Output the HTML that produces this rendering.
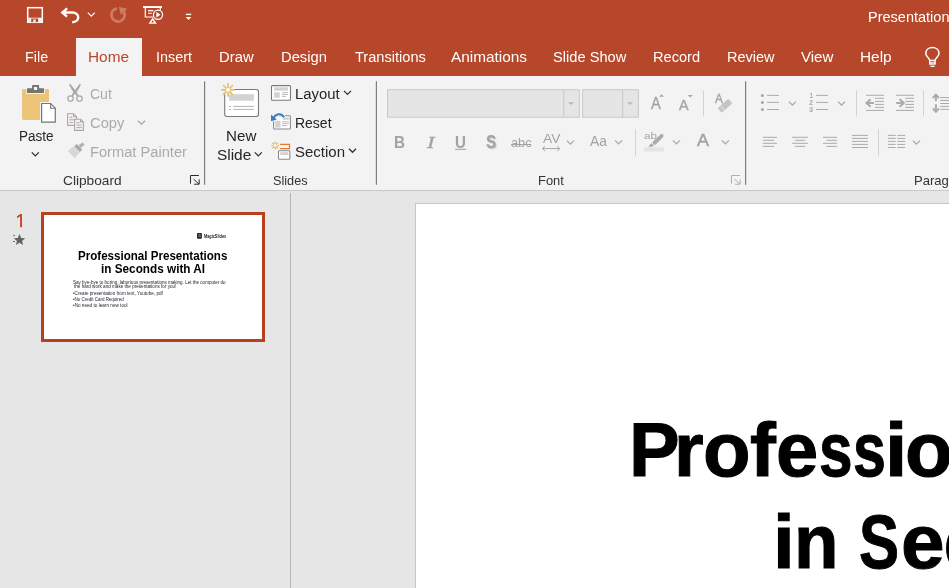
<!DOCTYPE html>
<html>
<head>
<meta charset="utf-8">
<title>PowerPoint</title>
<style>
html,body{margin:0;padding:0;}
body{width:949px;height:588px;overflow:hidden;position:relative;background:#e6e6e6;font-family:"Liberation Sans",sans-serif;}
.abs{position:absolute;}
#titlebar{left:0;top:0;width:949px;height:76px;background:#b7472a;}
#hometab{left:76px;top:38px;width:66px;height:38px;background:#f3f3f3;}
.tab{position:absolute;top:47px;height:20px;line-height:20px;font-size:15.5px;color:#fff;white-space:nowrap;transform-origin:0 50%;}
#ribbon{left:0;top:76px;width:949px;height:114px;background:#f3f3f3;}
#ribbonline{left:0;top:190px;width:949px;height:1px;background:#c8c8c8;}
.lbl{position:absolute;font-size:15.5px;line-height:20px;height:20px;color:#262626;white-space:nowrap;transform-origin:0 50%;}
.dis{color:#aaaaaa;}
.grp{position:absolute;font-size:13px;line-height:16px;color:#333;white-space:nowrap;transform-origin:0 50%;}
#paneldiv{left:290px;top:193px;width:1px;height:395px;background:#b4b4b4;}
#thumb{left:41px;top:212px;width:218px;height:124px;border:3px solid #b9401f;background:#fff;}
#slide{left:415px;top:203px;width:540px;height:390px;background:#fff;border:1px solid #c6c6c6;}
svg{position:absolute;overflow:visible;}
.bl{position:absolute;font-weight:bold;font-size:75.5px;line-height:100px;height:100px;color:#000;-webkit-text-stroke:1.0px #000;transform-origin:0 0;white-space:nowrap;}
.gl{position:absolute;white-space:nowrap;transform-origin:0 0;}
.tt{position:absolute;white-space:nowrap;transform-origin:0 0;}
#root{position:absolute;left:0;top:0;width:949px;height:588px;overflow:hidden;will-change:transform;}
</style>
</head>
<body>
<div id="root">
<div id="titlebar" class="abs"></div>
<div id="hometab" class="abs"></div>
<div id="ribbon" class="abs"></div>
<div id="ribbonline" class="abs"></div>

<!-- TABS -->
<span class="tab" id="t-file" style="left:24.9px;transform:scaleX(0.926);">File</span>
<span class="tab" id="t-home" style="left:88.1px;color:#b7472a;transform:scaleX(0.992);">Home</span>
<span class="tab" id="t-insert" style="left:156.0px;transform:scaleX(0.928);">Insert</span>
<span class="tab" id="t-draw" style="left:219.3px;transform:scaleX(0.958);">Draw</span>
<span class="tab" id="t-design" style="left:281.2px;transform:scaleX(0.952);">Design</span>
<span class="tab" id="t-trans" style="left:354.6px;transform:scaleX(0.941);">Transitions</span>
<span class="tab" id="t-anim" style="left:451.0px;transform:scaleX(0.992);">Animations</span>
<span class="tab" id="t-show" style="left:552.8px;transform:scaleX(0.945);">Slide Show</span>
<span class="tab" id="t-record" style="left:653.3px;transform:scaleX(0.941);">Record</span>
<span class="tab" id="t-review" style="left:727.2px;transform:scaleX(0.936);">Review</span>
<span class="tab" id="t-view" style="left:800.9px;transform:scaleX(0.972);">View</span>
<span class="tab" id="t-help" style="left:860.2px;transform:scaleX(0.992);">Help</span>
<span class="tab" id="t-pres" style="left:868.1px;top:7.4px;transform:scaleX(0.936);">Presentation1</span>


<!-- QAT ICONS -->
<svg id="qat" style="left:0;top:0;" width="210" height="36" viewBox="0 0 210 36">
  <!-- save -->
  <rect x="27.7" y="7.7" width="14.6" height="14.6" fill="none" stroke="#fff" stroke-width="1.5"/>
  <rect x="27.5" y="17.7" width="15" height="5" fill="#f6efec"/>
  <rect x="31.2" y="18.5" width="6.9" height="3.6" fill="#b7472a"/>
  <rect x="33.2" y="19.5" width="2.5" height="2.6" fill="#f6efec"/>
  <!-- undo -->
  <path d="M67.2 8.4 L62.3 12.5 L67 16.7" fill="none" stroke="#fff" stroke-width="2.4" stroke-linejoin="miter"/>
  <path d="M62.6 12.5 H72.4 C80.2 12.5 80.2 22.2 72.2 22.2" fill="none" stroke="#fff" stroke-width="2.4"/>
  <!-- undo chevron -->
  <path d="M87.8 12.6 L91.3 16.1 L94.8 12.6" fill="none" stroke="#fff" stroke-width="1.2"/>
  <!-- redo dim -->
  <path d="M116.85 8.35 A6.65 6.65 0 1 0 123.6 11.2" fill="none" stroke="#cc7b65" stroke-width="2.7"/>
  <path d="M119 7 L126.8 8.4 L124.6 12.4 L120.8 14.8 Z" fill="#cc7b65"/>
  <!-- presentation -->
  <rect x="143" y="6.1" width="19" height="1.9" fill="#fff"/>
  <path d="M145.3 8 V17 H153" fill="none" stroke="#fff" stroke-width="1.2"/>
  <path d="M160.3 8 V10" fill="none" stroke="#fff" stroke-width="1.2"/>
  <path d="M148 10.6 H153.4 M148 13.3 H151.8" stroke="#fff" stroke-width="1.1"/>
  <circle cx="158" cy="14.8" r="4.6" fill="none" stroke="#fff" stroke-width="1.2"/>
  <path d="M156.3 12 L160.6 14.8 L156.3 17.6 Z" fill="#fff"/>
  <path d="M152.7 17.4 L148.6 23.7 H156.8 Z" fill="#fff"/>
  <path d="M152.7 20.2 L151.2 22.4 H154.2 Z" fill="#b7472a"/>
  <!-- customize -->
  <rect x="185.9" y="13.7" width="5.3" height="1.4" fill="#fff"/>
  <path d="M185.7 16.9 H191.4 L188.55 20 Z" fill="#fff"/>
</svg>
<!-- lightbulb -->
<svg style="left:920px;top:44px;" width="29" height="28" viewBox="920 44 29 28">
  <path d="M929.7 60.4 C929.4 57.6 925.8 56.6 925.8 53.6 C925.8 49.8 928.8 47.6 932.4 47.6 C936 47.6 939 49.8 939 53.6 C939 56.6 935.4 57.6 935.1 60.4" fill="none" stroke="#fff" stroke-width="1.5"/>
  <rect x="929.7" y="60.4" width="5.4" height="3.6" fill="none" stroke="#fff" stroke-width="1.4"/>
  <path d="M929.7 62.4 H935.1" stroke="#fff" stroke-width="0.9"/>
  <path d="M930.4 66.3 H934.6" stroke="#fff" stroke-width="1.3"/>
</svg>

<!-- RIBBON LABELS -->
<span class="lbl" id="l-paste" style="left:19.0px;top:125.7px;transform:scaleX(0.872);">Paste</span>
<span class="lbl dis" id="l-cut" style="left:90.2px;top:83.9px;transform:scaleX(0.903);">Cut</span>
<span class="lbl dis" id="l-copy" style="left:90.2px;top:112.9px;transform:scaleX(0.950);">Copy</span>
<span class="lbl dis" id="l-fp" style="left:89.7px;top:141.9px;transform:scaleX(0.946);">Format Painter</span>
<span class="grp" id="l-clip" style="left:62.6px;top:172.9px;transform:scaleX(1.054);">Clipboard</span>
<span class="lbl" id="l-new" style="left:225.7px;top:125.7px;transform:scaleX(0.978);">New</span>
<span class="lbl" id="l-slide" style="left:216.7px;top:145.4px;transform:scaleX(0.994);">Slide</span>
<span class="lbl" id="l-layout" style="left:294.8px;top:83.9px;transform:scaleX(0.959);">Layout</span>
<span class="lbl" id="l-reset" style="left:294.9px;top:112.9px;transform:scaleX(0.902);">Reset</span>
<span class="lbl" id="l-section" style="left:295.3px;top:141.9px;transform:scaleX(0.968);">Section</span>
<span class="grp" id="l-slides" style="left:272.6px;top:172.9px;transform:scaleX(0.975);">Slides</span>
<span class="grp" id="l-font" style="left:537.7px;top:172.9px;transform:scaleX(0.992);">Font</span>
<span class="grp" id="l-para" style="left:914.3px;top:172.9px;transform:scaleX(1.005);">Paragraph</span>
<!-- RIBBON ICONS -->
<svg id="ribsvg" style="left:0;top:76px;" width="949" height="114" viewBox="0 76 949 114">
<defs>
  <path id="chev" d="M-3.5 -1.8 L0 1.7 L3.5 -1.8" fill="none" stroke-width="1.3"/>
</defs>
<!-- group separators -->
<rect x="204" y="81.3" width="1.2" height="103.5" fill="#7d7d7d"/>
<rect x="375.8" y="81.3" width="1.2" height="103.5" fill="#7d7d7d"/>
<rect x="745" y="81.3" width="1.2" height="103.5" fill="#7d7d7d"/>
<!-- thin separators -->
<rect x="635" y="129" width="1" height="26.5" fill="#d2d2d2"/>
<rect x="703" y="90.4" width="1" height="26" fill="#d2d2d2"/>
<rect x="856" y="90.3" width="1" height="26.2" fill="#d2d2d2"/>
<rect x="923" y="90.3" width="1" height="26.2" fill="#d2d2d2"/>
<rect x="878" y="129" width="1" height="26.7" fill="#d2d2d2"/>

<!-- PASTE -->
<g id="i-paste">
  <rect x="22.1" y="88.9" width="26.9" height="31" rx="1.3" fill="#ebc477"/>
  <path d="M26.2 94 V87.4 H31.3 V84.2 H39.9 V87.4 H44.9 V94 Z" fill="#f3f3f3"/>
  <path d="M27 93.1 V88.6 Q27 88.2 27.4 88.2 H32.1 V85.6 Q32.1 85 32.7 85 H38.5 Q39.1 85 39.1 85.6 V88.2 H43.6 Q44 88.2 44 88.6 V93.1 Z" fill="#757575"/>
  <rect x="34" y="87" width="3.1" height="3" fill="#f6f6f6"/>
  <path d="M40 102 H51.5 L56.8 107.3 V123.8 H40 Z" fill="#f3f3f3"/>
  <path d="M41.6 103.5 H50.6 L55.3 108.2 V122.2 H41.6 Z" fill="#fff" stroke="#777" stroke-width="1.2" stroke-linejoin="miter"/>
  <path d="M50.6 103.5 V108.2 H55.3" fill="none" stroke="#777" stroke-width="1.1"/>
</g>
<use href="#chev" x="35.3" y="154.2" stroke="#333"/>

<!-- CUT -->
<g id="i-cut" fill="none" stroke="#a8a8a8" stroke-width="1.2">
  <circle cx="70.5" cy="98.6" r="2.7"/>
  <circle cx="79.5" cy="98.6" r="2.7"/>
  <path d="M69.6 84 C70 88 72.5 91 77.6 96.3 L78.4 95.6 C76 91 73 87.5 69.6 84 Z" fill="#a8a8a8" stroke="none"/>
  <path d="M80.4 84 C80 88 77.5 91 72.4 96.3 L71.6 95.6 C74 91 77 87.5 80.4 84 Z" fill="#a8a8a8" stroke="none"/>
  <path d="M69.7 84.2 L77.9 96 M80.3 84.2 L72.1 96" stroke-width="1.5"/>
</g>
<!-- COPY -->
<g id="i-copy" stroke="#a8a8a8" stroke-width="1.1" fill="#f7f0f5">
  <path d="M67.6 113.7 H73.6 L76.6 116.7 V125.4 H67.6 Z"/>
  <path d="M73.6 113.7 V116.7 H76.6" fill="none"/>
  <path d="M69.4 117.2 H72.3 M69.4 119.8 H74.8 M69.4 122.4 H73" stroke-width="1"/>
  <path d="M74.6 119.2 H80.6 L83.4 122 V130.4 H74.6 Z"/>
  <path d="M80.6 119.2 V122 H83.4" fill="none"/>
  <path d="M76.4 122.6 H79.6 M76.4 125.1 H81.7 M76.4 127.6 H81.7" stroke-width="1"/>
</g>
<use href="#chev" x="141.5" y="122.5" stroke="#a8a8a8"/>
<!-- FORMAT PAINTER -->
<g id="i-fp">
  <path d="M67.8 151 L73.6 146.4 L79.6 152.6 L74.8 158.2 Z" fill="#d9d5d9"/>
  <path d="M74.2 146.2 L76.8 144 L82.2 149.6 L79.8 152 Z" fill="#a8a8a8"/>
  <path d="M78.6 145 L82.6 142.4 L84.6 144.6 L81 148 Z" fill="#b4b0b4"/>
</g>

<!-- NEW SLIDE -->
<g id="i-newslide">
  <rect x="224.7" y="89.5" width="33.8" height="27" rx="2.2" fill="#fff" stroke="#7a7a7a" stroke-width="1.1"/>
  <rect x="229.1" y="94.2" width="24.8" height="6.5" fill="#d2d2d2"/>
  <path d="M229 106.4 H231 M233.1 106.4 H253.9 M229 109.4 H231 M233.1 109.4 H253.9" stroke="#b4b4b4" stroke-width="1"/>
  <circle cx="228" cy="89.9" r="4.6" fill="#f3f3f3"/>
  <g stroke="#eabd70" stroke-width="1.7">
    <path d="M228 83 V96.8 M221.1 89.9 H234.9 M223.1 85 L232.9 94.8 M232.9 85 L223.1 94.8"/>
  </g>
  <circle cx="228" cy="89.9" r="1.9" fill="#fff"/>
</g>
<use href="#chev" x="258.3" y="154.2" stroke="#333"/>
<!-- LAYOUT -->
<g id="i-layout">
  <rect x="271.5" y="85.6" width="19" height="14.7" rx="1" fill="#fff" stroke="#7a7a7a" stroke-width="1.1"/>
  <rect x="274.1" y="87.3" width="13.9" height="3.4" fill="#d2d2d2"/>
  <rect x="274.1" y="92.3" width="5.7" height="5.5" fill="#d2d2d2"/>
  <path d="M282 92.6 H288 M282 94.5 H288 M282 96.4 H286" stroke="#b4b4b4" stroke-width="0.9"/>
</g>
<use href="#chev" x="347.5" y="92.7" stroke="#333"/>
<!-- RESET -->
<g id="i-reset">
  <rect x="273.6" y="115.8" width="16.8" height="13.2" rx="0.8" fill="#fff" stroke="#8a8a8a" stroke-width="1.1"/>
  <rect x="275.2" y="120.8" width="5.3" height="6.8" fill="#d2d2d2"/>
  <rect x="283" y="117.4" width="5.9" height="2.4" fill="#d2d2d2"/>
  <path d="M282 121.8 H288.9 M282 123.7 H288.9 M282 125.6 H287" stroke="#b4b4b4" stroke-width="0.9"/>
  <path d="M273.6 119 C274.6 113.6 281.8 112.4 284 117.4" fill="none" stroke="#f3f3f3" stroke-width="3.6"/>
  <path d="M270.2 113.6 L277.8 120.2 L270.2 122 Z" fill="#f3f3f3"/>
  <path d="M273.6 119 C274.6 113.6 281.8 112.4 284 117.4" fill="none" stroke="#3d7dc0" stroke-width="2"/>
  <path d="M271 114.4 L276.8 119.6 L271 121.2 Z" fill="#3d7dc0"/>
</g>
<!-- SECTION -->
<g id="i-section">
  <g stroke="#eabd70" stroke-width="1.3">
    <path d="M275.2 141.6 V149.6 M271.2 145.6 H279.2 M272.4 142.8 L278 148.4 M278 142.8 L272.4 148.4"/>
  </g>
  <circle cx="275.2" cy="145.6" r="1.4" fill="#fff"/>
  <path d="M280.1 144.4 H289.5 V148.6 H280.1" fill="none" stroke="#e8772e" stroke-width="1.2"/>
  <rect x="278.5" y="150.8" width="11.3" height="8.4" rx="0.7" fill="#fff" stroke="#8a8a8a" stroke-width="1.1"/>
  <rect x="280.2" y="152.2" width="8" height="2.8" fill="#d2d2d2"/>
</g>
<use href="#chev" x="352.5" y="150.6" stroke="#333"/>

<!-- dialog launchers -->
<g id="dl1" fill="none" stroke="#2b2b2b" stroke-width="1">
  <path d="M190.5 183.6 V175.5 H198.9"/>
  <path d="M193.6 179.2 L199 184 M199.2 179.4 V184.2 H194"/>
</g>
<g id="dl2" fill="none" stroke="#b0b0b0" stroke-width="1">
  <path d="M731.5 183.6 V175.5 H739.9"/>
  <path d="M734.6 179.2 L740 184 M740.2 179.4 V184.2 H735"/>
</g>

<!-- FONT BOXES -->
<rect x="387.5" y="89.8" width="191.8" height="27.4" fill="#e5e5e5" stroke="#c8c8c8" stroke-width="1"/>
<rect x="563.3" y="89.8" width="1" height="27.4" fill="#c8c8c8"/>
<path d="M568 102.2 H574.2 L571.1 105 Z" fill="#b9b9b9"/>
<rect x="582.6" y="89.8" width="55.8" height="27.4" fill="#e5e5e5" stroke="#c8c8c8" stroke-width="1"/>
<rect x="622.2" y="89.8" width="1" height="27.4" fill="#c8c8c8"/>
<path d="M626.9 102.2 H633.1 L630 105 Z" fill="#b9b9b9"/>
<!-- grow/shrink triangles -->
<path d="M659 96.8 H664 L661.5 94.2 Z" fill="#a8a8a8"/>
<path d="M687.6 95 H692.8 L690.2 97.5 Z" fill="#a8a8a8"/>
<!-- clear formatting eraser -->
<g id="i-clear">
  <path d="M718.6 107.2 L727.4 99.6 Q728.4 98.8 729.3 99.8 L731.6 102.5 Q732.4 103.5 731.4 104.3 L722.6 111.9 Q721.6 112.7 720.8 111.7 L718.4 109 Q717.6 108 718.6 107.2 Z" fill="#c6c2c6"/>
  <path d="M720.5 105.6 L724.6 110.3" stroke="#f3f3f3" stroke-width="0.9"/>
</g>
<!-- U underline, abc strike, AV arrow -->
<rect x="455.1" y="148.8" width="10.9" height="1.1" fill="#a3a3a3"/>
<rect x="511" y="144" width="20" height="1" fill="#a3a3a3"/>
<g stroke="#a8a8a8" stroke-width="1" fill="none">
  <path d="M542.4 148.6 H559.8"/>
  <path d="M545 146.2 L542.4 148.6 L545 151 M557.2 146.2 L559.8 148.6 L557.2 151"/>
</g>
<use href="#chev" x="570.4" y="142.4" stroke="#a8a8a8"/>
<use href="#chev" x="618.6" y="142.2" stroke="#a8a8a8"/>
<!-- highlighter -->
<g id="i-hl">
  <rect x="644.2" y="147.3" width="19.6" height="4.2" fill="#e7e0e9"/>
  <path d="M660.4 134.4 Q661.8 133.2 663 134.6 Q664.2 136 663 137.2 L655 145.2 L652 142.4 Z" fill="#ababab"/>
  <path d="M651.2 143.2 L654.2 146 L648.4 147 Z" fill="#9f9f9f"/>
</g>
<use href="#chev" x="676.4" y="142.2" stroke="#a8a8a8"/>
<use href="#chev" x="725.4" y="142.2" stroke="#a8a8a8"/>

<!-- PARAGRAPH -->
<g id="i-bullets" stroke="#aaa" stroke-width="1">
  <circle cx="762.4" cy="95.4" r="1.5" fill="#a6a6a6" stroke="none"/>
  <circle cx="762.4" cy="102.4" r="1.5" fill="#a6a6a6" stroke="none"/>
  <circle cx="762.4" cy="109.5" r="1.5" fill="#a6a6a6" stroke="none"/>
  <path d="M767 95.4 H779 M767 102.4 H779 M767 109.5 H779"/>
</g>
<use href="#chev" x="792.4" y="103.4" stroke="#a8a8a8"/>
<g id="i-num" stroke="#aaa" stroke-width="1">
  <path d="M816.2 95.4 H828 M816.2 102.4 H828 M816.2 109.5 H828"/>
</g>
<use href="#chev" x="841.6" y="103.4" stroke="#a8a8a8"/>
<g id="i-dec" stroke="#aaa" stroke-width="1" fill="none">
  <path d="M866 95.3 H884 M875 98.3 H884 M875 101.4 H884 M875 104.4 H884 M875 107.4 H884 M866 110.4 H884"/>
  <path d="M868 103 H874" stroke-width="2"/>
  <path d="M870.6 99.2 L866.4 103 L870.6 106.8" stroke-width="2" stroke-linejoin="miter"/>
</g>
<g id="i-inc" stroke="#aaa" stroke-width="1" fill="none">
  <path d="M896 95.3 H914 M905.3 98.3 H914 M905.3 101.4 H914 M905.3 104.4 H914 M905.3 107.4 H914 M896 110.4 H914"/>
  <path d="M896.2 103 H902.2" stroke-width="2"/>
  <path d="M899.6 99.2 L903.8 103 L899.6 106.8" stroke-width="2" stroke-linejoin="miter"/>
</g>
<g id="i-ls" stroke="#aaa" stroke-width="1" fill="none">
  <path d="M940.2 97.6 H949 M940.2 100.5 H949 M940.2 103.5 H949 M940.2 106.4 H949 M940.2 109.3 H949"/>
  <path d="M935.9 95.4 V101.2 M935.9 104.3 V111" stroke-width="2"/>
  <path d="M932.8 98 L935.9 94.6 L939 98 M932.8 108.4 L935.9 111.8 L939 108.4" stroke-width="1.9"/>
</g>
<g id="i-align" stroke="#aaa" stroke-width="1" fill="none">
  <path d="M762.9 137.3 H776.9 M762.9 140.3 H774 M762.9 143.3 H776.9 M762.9 146.4 H774"/>
  <path d="M792.1 137.3 H807.9 M795.1 140.3 H805 M792.1 143.3 H807.9 M795.1 146.4 H805"/>
  <path d="M823 137.3 H836.9 M826.3 140.3 H836.9 M823 143.3 H836.9 M826.3 146.4 H836.9"/>
  <path d="M851.9 135.4 H868 M851.9 138.4 H868 M851.9 141.4 H868 M851.9 144.4 H868 M851.9 147.5 H868"/>
  <path d="M887.9 135.4 H895.7 M887.9 138.4 H895.7 M887.9 141.4 H895.7 M887.9 144.4 H895.7 M887.9 147.5 H895.7"/>
  <path d="M897.3 135.4 H905.2 M897.3 138.4 H905.2 M897.3 141.4 H905.2 M897.3 144.4 H905.2 M897.3 147.5 H905.2"/>
</g>
<use href="#chev" x="916.4" y="142.4" stroke="#a8a8a8"/>
</svg>

<!-- GLYPH ICONS -->
<span class="gl" id="g-b" style="left:394.16px;top:132.68px;font:bold 17px/20px 'Liberation Sans';color:#a3a3a3;transform:scale(0.898,1.021);">B</span>
<span class="gl" id="g-i" style="left:427.15px;top:131.58px;font:italic 18px/20px 'Liberation Serif';color:#a3a3a3;-webkit-text-stroke:0.3px #a3a3a3;transform:scale(1.257,0.980);">I</span>
<span class="gl" id="g-u" style="left:455.32px;top:132.81px;font:bold 17px/20px 'Liberation Sans';color:#a3a3a3;transform:scale(0.888,1.000);">U</span>
<span class="gl" id="g-s" style="left:485.50px;top:131.08px;font:bold 18px/20px 'Liberation Sans';color:#a3a3a3;text-shadow:1.2px 1.2px 1.2px #bdbdbd;transform:scale(0.837,1.067);">S</span>
<span class="gl" id="g-abc" style="left:510.99px;top:135.90px;font:13px/16px 'Liberation Sans';color:#a3a3a3;transform:scale(0.985,0.954);">abc</span>
<span class="gl" id="g-av" style="left:542.70px;top:130.44px;font:14px/16px 'Liberation Sans';color:#a3a3a3;transform:scale(0.983,0.974);">AV</span>
<span class="gl" id="g-aa" style="left:590.47px;top:131.29px;font:15px/20px 'Liberation Sans';color:#a3a3a3;transform:scale(0.926,0.990);">Aa</span>
<span class="gl" id="g-fc" style="left:696.92px;top:130.58px;font:18px/20px 'Liberation Sans';color:#a3a3a3;-webkit-text-stroke:0.5px #a3a3a3;transform:scale(1.000,0.946);">A</span>
<span class="gl" id="g-grow" style="left:650.76px;top:94.32px;font:16px/20px 'Liberation Sans';color:#a3a3a3;-webkit-text-stroke:0.35px #a3a3a3;transform:scale(0.918,0.974);">A</span>
<span class="gl" id="g-shrink" style="left:679.45px;top:94.95px;font:14px/20px 'Liberation Sans';color:#a3a3a3;-webkit-text-stroke:0.35px #a3a3a3;transform:scale(1.026,0.980);">A</span>
<span class="gl" id="g-clr" style="left:714.75px;top:91.30px;font:13px/16px 'Liberation Sans';color:#a3a3a3;-webkit-text-stroke:0.35px #a3a3a3;transform:scale(0.900,0.979);">A</span>
<span class="gl" id="g-ab" style="left:644.28px;top:130.29px;font:10px/12px 'Liberation Sans';color:#a3a3a3;transform:scale(1.171,0.993);">ab</span>
<span class="gl" id="g-n1" style="left:809.59px;top:92.26px;font:bold 6.5px/8px 'Liberation Sans';color:#aaa;transform:scale(1.000,0.978);">1</span>
<span class="gl" id="g-n2" style="left:809.14px;top:99.20px;font:bold 6.5px/8px 'Liberation Sans';color:#aaa;transform:scale(1.133,0.978);">2</span>
<span class="gl" id="g-n3" style="left:809.42px;top:105.69px;font:bold 6.5px/8px 'Liberation Sans';color:#aaa;transform:scale(1.133,0.978);">3</span>
<!-- PANEL -->
<div id="paneldiv" class="abs"></div>
<div id="thumb" class="abs"></div>
<div id="slide" class="abs"></div>


<!-- MAIN SLIDE TEXT -->
<div id="bigwrap">
<span class="bl" style="left:628.9px;top:399.6px;transform:scaleX(1.007);">P</span>
<span class="bl" style="left:674.0px;top:399.6px;transform:scaleX(1.008);">r</span>
<span class="bl" style="left:702.9px;top:399.6px;transform:scaleX(1.031);">o</span>
<span class="bl" style="left:750.0px;top:399.6px;transform:scaleX(1.028);">f</span>
<span class="bl" style="left:775.8px;top:399.6px;transform:scaleX(1.005);">e</span>
<span class="bl" style="left:819.4px;top:399.6px;transform:scaleX(0.800);">s</span>
<span class="bl" style="left:852.9px;top:399.6px;transform:scaleX(0.784);">s</span>
<span class="bl" style="left:884.5px;top:399.6px;transform:scaleX(1.064);">i</span>
<span class="bl" style="left:905.2px;top:399.6px;transform:scaleX(1.029);">o</span>
<span class="bl" style="left:772.6px;top:491.5px;transform:scaleX(1.036);">i</span>
<span class="bl" style="left:793.8px;top:491.5px;transform:scaleX(0.965);">n</span>
<span class="bl" style="left:858.6px;top:491.5px;transform:scaleX(0.796);">S</span>
<span class="bl" style="left:900.9px;top:491.5px;transform:scaleX(1.037);">e</span>
<span class="bl" style="left:943.6px;top:491.5px;transform:scaleX(0.861);">c</span>
</div>

<!-- THUMB CONTENT -->
<svg style="left:14px;top:210px;" width="12" height="20" viewBox="14 210 12 20">
  <path d="M20.1 214 H22 V227.2 H20.1 V216.2 L17.3 218.2 L16.9 216.6 Z" fill="#cf4520"/>
</svg>

<svg style="left:10px;top:230px;" width="20" height="20" viewBox="10 230 20 20">
  <path d="M19.5 234 L21.2 238.1 L25.2 238.3 L22.1 240.9 L23.1 245 L19.5 242.8 L15.9 245 L16.9 240.9 L13.8 238.3 L17.8 238.1 Z" fill="#636363"/>
  <path d="M13 235.4 H15 M13 241.5 H15" stroke="#636363" stroke-width="0.9"/>
</svg>


<svg style="left:196px;top:232px;" width="8" height="8" viewBox="196 232 8 8">
  <rect x="197" y="233" width="4.9" height="5.7" rx="0.9" fill="#222"/>
  <path d="M198.2 235.4 L199.4 234.4 L200.8 235.2 M198.2 237 L199.4 236 L200.8 236.8" stroke="#fff" stroke-width="0.5" fill="none"/>
</svg>
<span class="tt" id="th1" style="left:78.44px;top:247.54px;font:bold 13.5px/16.2px 'Liberation Sans';color:#000;transform:scaleX(0.858);">Professional Presentations</span>
<span class="tt" id="th2" style="left:101.23px;top:261.24px;font:bold 13.5px/16.2px 'Liberation Sans';color:#000;transform:scaleX(0.871);">in Seconds with AI</span>
<span class="tt" id="th-logo" style="left:203.62px;top:233.08px;font:bold 5.2px/6.2px 'Liberation Sans';color:#222;transform:scaleX(0.739);">MagicSlides</span>
<span class="tt" id="th-p1" style="left:73.45px;top:279.81px;font:normal 4.5px/5.4px 'Liberation Sans';color:#1c1c2a;transform:scaleX(1.010);">Say bye-bye to boring, laborious presentations making. Let the computer do</span>
<span class="tt" id="th-p2" style="left:73.70px;top:284.01px;font:normal 4.5px/5.4px 'Liberation Sans';color:#1c1c2a;transform:scaleX(1.020);">the hard work and make the presentations for you!</span>
<span class="tt" id="th-b1" style="left:73.44px;top:291.01px;font:normal 4.5px/5.4px 'Liberation Sans';color:#1c1c2a;transform:scaleX(1.028);">•Create presentation from text, Youtube, pdf</span>
<span class="tt" id="th-b2" style="left:73.45px;top:296.91px;font:normal 4.5px/5.4px 'Liberation Sans';color:#1c1c2a;transform:scaleX(0.994);">•No Credit Card Required</span>
<span class="tt" id="th-b3" style="left:73.44px;top:302.91px;font:normal 4.5px/5.4px 'Liberation Sans';color:#1c1c2a;transform:scaleX(1.033);">•No need to learn new tool</span>
</div>
</body>
</html>
